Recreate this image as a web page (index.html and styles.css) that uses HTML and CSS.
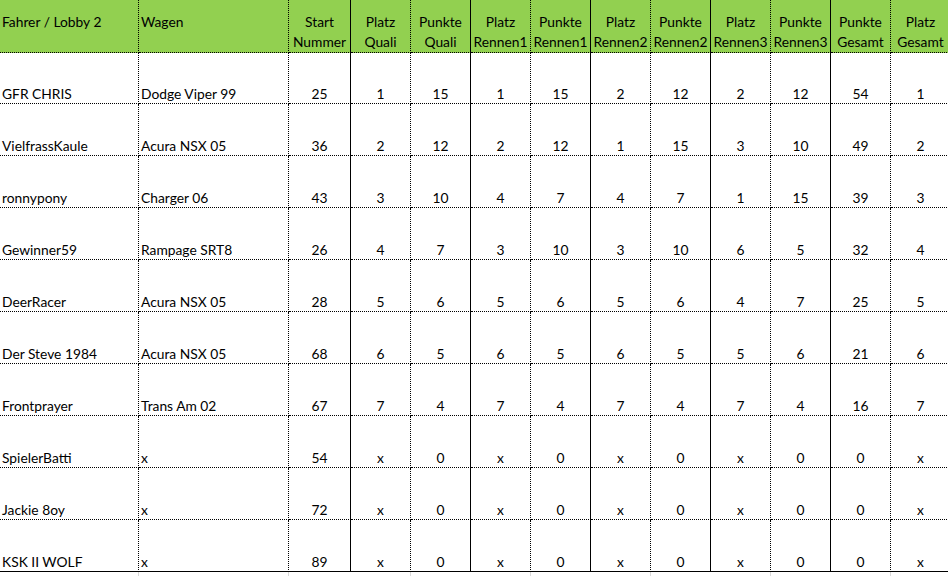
FILE: index.html
```html
<!DOCTYPE html>
<html lang="de">
<head>
<meta charset="utf-8">
<title>Lobby 2</title>
<link rel="stylesheet" href="styles.css">
</head>
<body>
<div class="sheet">
  <div class="row head">
    <div class="c t d">Fahrer / Lobby 2</div>
    <div class="c t d">Wagen</div>
    <div class="c s">Start<br>Nummer</div>
    <div class="c d">Platz<br>Quali</div>
    <div class="c s">Punkte<br>Quali</div>
    <div class="c d">Platz<br>Rennen1</div>
    <div class="c s">Punkte<br>Rennen1</div>
    <div class="c d">Platz<br>Rennen2</div>
    <div class="c s">Punkte<br>Rennen2</div>
    <div class="c d">Platz<br>Rennen3</div>
    <div class="c s">Punkte<br>Rennen3</div>
    <div class="c d">Punkte<br>Gesamt</div>
    <div class="c d">Platz<br>Gesamt</div>
  </div>
  <div class="row"><div class="c t d">GFR CHRIS</div><div class="c t d">Dodge Viper 99</div><div class="c s">25</div><div class="c d">1</div><div class="c s">15</div><div class="c d">1</div><div class="c s">15</div><div class="c d">2</div><div class="c s">12</div><div class="c d">2</div><div class="c s">12</div><div class="c d">54</div><div class="c d">1</div></div>
  <div class="row"><div class="c t d">VielfrassKaule</div><div class="c t d">Acura NSX 05</div><div class="c s">36</div><div class="c d">2</div><div class="c s">12</div><div class="c d">2</div><div class="c s">12</div><div class="c d">1</div><div class="c s">15</div><div class="c d">3</div><div class="c s">10</div><div class="c d">49</div><div class="c d">2</div></div>
  <div class="row"><div class="c t d">ronnypony</div><div class="c t d">Charger 06</div><div class="c s">43</div><div class="c d">3</div><div class="c s">10</div><div class="c d">4</div><div class="c s">7</div><div class="c d">4</div><div class="c s">7</div><div class="c d">1</div><div class="c s">15</div><div class="c d">39</div><div class="c d">3</div></div>
  <div class="row"><div class="c t d">Gewinner59</div><div class="c t d">Rampage SRT8</div><div class="c s">26</div><div class="c d">4</div><div class="c s">7</div><div class="c d">3</div><div class="c s">10</div><div class="c d">3</div><div class="c s">10</div><div class="c d">6</div><div class="c s">5</div><div class="c d">32</div><div class="c d">4</div></div>
  <div class="row"><div class="c t d">DeerRacer</div><div class="c t d">Acura NSX 05</div><div class="c s">28</div><div class="c d">5</div><div class="c s">6</div><div class="c d">5</div><div class="c s">6</div><div class="c d">5</div><div class="c s">6</div><div class="c d">4</div><div class="c s">7</div><div class="c d">25</div><div class="c d">5</div></div>
  <div class="row"><div class="c t d">Der Steve 1984</div><div class="c t d">Acura NSX 05</div><div class="c s">68</div><div class="c d">6</div><div class="c s">5</div><div class="c d">6</div><div class="c s">5</div><div class="c d">6</div><div class="c s">5</div><div class="c d">5</div><div class="c s">6</div><div class="c d">21</div><div class="c d">6</div></div>
  <div class="row"><div class="c t d">Frontprayer</div><div class="c t d">Trans Am 02</div><div class="c s">67</div><div class="c d">7</div><div class="c s">4</div><div class="c d">7</div><div class="c s">4</div><div class="c d">7</div><div class="c s">4</div><div class="c d">7</div><div class="c s">4</div><div class="c d">16</div><div class="c d">7</div></div>
  <div class="row"><div class="c t d">SpielerBatti</div><div class="c t d">x</div><div class="c s">54</div><div class="c d">x</div><div class="c s">0</div><div class="c d">x</div><div class="c s">0</div><div class="c d">x</div><div class="c s">0</div><div class="c d">x</div><div class="c s">0</div><div class="c d">0</div><div class="c d">x</div></div>
  <div class="row"><div class="c t d">Jackie 8oy</div><div class="c t d">x</div><div class="c s">72</div><div class="c d">x</div><div class="c s">0</div><div class="c d">x</div><div class="c s">0</div><div class="c d">x</div><div class="c s">0</div><div class="c d">x</div><div class="c s">0</div><div class="c d">0</div><div class="c d">x</div></div>
  <div class="row last"><div class="c t d">KSK II WOLF</div><div class="c t d">x</div><div class="c s">89</div><div class="c d">x</div><div class="c s">0</div><div class="c d">x</div><div class="c s">0</div><div class="c d">x</div><div class="c s">0</div><div class="c d">x</div><div class="c s">0</div><div class="c d">0</div><div class="c d">x</div></div>
  <div class="row grid">
    <div class="g gd"></div><div class="g gd"></div><div class="g"></div><div class="g gd"></div><div class="g"></div><div class="g gd"></div><div class="g"></div><div class="g gd"></div><div class="g"></div><div class="g gd"></div><div class="g"></div><div class="g gd"></div><div class="g gd"></div>
  </div>
</div>
</body>
</html>
```
FILE: styles.css
```css
html, body {
  margin: 0;
  padding: 0;
  background: #ffffff;
  overflow: hidden;
}
.sheet {
  width: 948px;
  height: 576px;
  overflow: hidden;
  font-family: "Lato", "Liberation Sans", sans-serif;
  font-size: 13.8px;
  color: #000;
}
.row {
  display: grid;
  grid-template-columns: 139px 150px 62px repeat(10, 60px);
  height: 52px;
}
.c {
  box-sizing: border-box;
  border-bottom: 1px dotted #000;
  display: flex;
  flex-direction: column;
  justify-content: flex-end;
  align-items: center;
  text-align: center;
  line-height: 19px;
  padding-bottom: 0;
  white-space: nowrap;
}
.c.d { border-right: 1px dotted #000; }
.c.s { border-right: 1px solid #000; }
.c.t {
  align-items: flex-start;
  text-align: left;
  padding-left: 2px;
}
.head .c {
  background: #92d050;
  justify-content: flex-start;
  padding-top: 12px;
  line-height: 20px;
}
.last .c { border-bottom: 1px solid #000; }
.row.grid { height: 4px; }
.g { box-sizing: border-box; }
.g.gd { border-right: 1px solid #d9d9d9; }
```
